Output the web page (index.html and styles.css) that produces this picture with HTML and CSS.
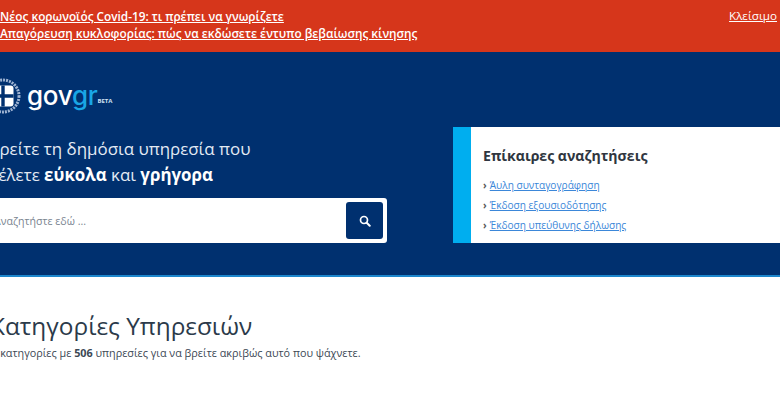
FILE: index.html
```html
<!DOCTYPE html>
<html lang="el">
<head>
<meta charset="utf-8">
<title>gov.gr</title>
<link rel="stylesheet" href="styles.css">
</head>
<body>
<section class="alert">
  <div class="alert-links">
    <a href="#">Νέος κορωνοϊός Covid-19: τι πρέπει να γνωρίζετε</a>
    <a href="#">Απαγόρευση κυκλοφορίας: πώς να εκδώσετε έντυπο βεβαίωσης κίνησης</a>
  </div>
  <a class="alert-close" href="#">Κλείσιμο</a>
</section>
<header class="hero">
  <div class="brand">
    <svg class="emblem" width="40" height="40" viewBox="0 0 40 40" aria-hidden="true">
      <circle cx="20" cy="20" r="16" fill="none" stroke="#9fb4d2" stroke-width="3" stroke-dasharray="2 1"/>
      <rect x="9.5" y="9.5" width="21" height="21" rx="3" fill="#fff"/>
      <path d="M20 9.5v21M9.5 20h21" stroke="#00306f" stroke-width="3.4"/>
    </svg>
    <span class="wordmark">gov<span class="wordmark-gr">gr</span></span>
    <span class="beta">BETA</span>
  </div>
  <div class="hero-main">
    <div class="finder">
      <h1 class="finder-title">Βρείτε τη δημόσια υπηρεσία που<br>θέλετε <b>εύκολα</b> και <b>γρήγορα</b></h1>
      <form class="search">
        <span class="search-text">Αναζητήστε εδώ ...</span>
        <button class="search-btn" type="button" aria-label="Αναζήτηση">
          <svg width="12" height="12" viewBox="0 0 12 12" aria-hidden="true">
            <circle cx="5" cy="5" r="3.5" fill="none" stroke="#fff" stroke-width="1.7"/>
            <path d="M7.7 7.7l3 3" stroke="#fff" stroke-width="2" stroke-linecap="round"/>
          </svg>
        </button>
      </form>
    </div>
    <aside class="trending">
      <h2 class="trending-title">Επίκαιρες αναζητήσεις</h2>
      <ul class="trending-list">
        <li><a href="#">Άυλη συνταγογράφηση</a></li>
        <li><a href="#">Έκδοση εξουσιοδότησης</a></li>
        <li><a href="#">Έκδοση υπεύθυνης δήλωσης</a></li>
      </ul>
    </aside>
  </div>
</header>
<main class="categories">
  <h2 class="categories-title">Κατηγορίες Υπηρεσιών</h2>
  <p class="categories-text">20 κατηγορίες με <b>506</b> υπηρεσίες για να βρείτε ακριβώς αυτό που ψάχνετε.</p>
</main>
</body>
</html>
```
FILE: styles.css
```css
* { box-sizing: border-box; }
html, body { margin: 0; height: 405px; overflow: hidden; background: #fff; }
body { font-family: "Open Sans", "Noto Sans", sans-serif; color: #2b3a4a; }

.alert {
  height: 52px;
  background: #d6361b;
  display: flex;
  justify-content: space-between;
  padding: 8px 3px 0 0;
  color: #fff;
  font-size: 11.8px;
}
.alert a { color: #fff; }
.alert-links { display: flex; flex-direction: column; font-weight: 600; line-height: 16.5px; }
.alert-close { font-size: 11.6px; line-height: 16px; }

.hero {
  height: 225px;
  background: #00306f;
  border-bottom: 2px solid #1c86cc;
  padding-top: 27px;
}
.brand { display: flex; align-items: center; height: 34px; margin-left: -17px; }
.emblem { flex: none; }
.wordmark { font-family: "Inter", sans-serif; color: #fff; font-size: 26px; font-weight: 500; letter-spacing: -0.3px; margin-left: 4px; line-height: 34px; }
.wordmark-gr { color: #19a7e6; }
.beta { color: #cfe0f2; font-size: 6px; font-weight: 700; margin: 10px 0 0 0; }

.hero-main { display: flex; margin-top: 14px; }
.finder { width: 453px; flex: none; padding-top: 9px; margin-left: -11.5px; }
.finder-title { margin: 0; font-size: 16.9px; line-height: 26px; font-weight: 400; color: #e3eaf4; }
.finder-title b { color: #fff; font-weight: 700; }
.search {
  width: 398.5px;
  height: 45px;
  margin-top: 10px;
  background: #fff;
  border-radius: 3px;
  display: flex;
  align-items: center;
  justify-content: space-between;
  padding: 0 4px 0 5.5px;
}
.search-text { font-size: 10.6px; color: #7a8490; }
.search-btn {
  width: 37px;
  height: 37px;
  background: #00306f;
  border: 0;
  border-radius: 3px;
  display: flex;
  align-items: center;
  justify-content: center;
  padding: 0;
}
.trending {
  flex: 1;
  margin-left: 11.5px;
  height: 116px;
  background: #fff;
  border-left: 18px solid #00aeef;
  padding: 19px 12px 0;
}
.trending-title { margin: 0; font-size: 14.1px; line-height: 20px; font-weight: 700; color: #2f3640; }
.trending-list { list-style: none; margin: 9px 0 0; padding: 0; font-size: 10.1px; line-height: 20px; }
.trending-list li::before { content: "›"; color: #555; font-weight: 700; margin-right: 3px; }
.trending-list a { color: #3b87d9; }

.categories { padding: 33px 0 0; margin-left: -10px; }
.categories-title { margin: 0; font-size: 24.4px; line-height: 32px; font-weight: 400; color: #2b3a4a; }
.categories-text { margin: 3px 0 0 -5px; font-size: 10.8px; line-height: 16px; color: #3c4854; }
```
